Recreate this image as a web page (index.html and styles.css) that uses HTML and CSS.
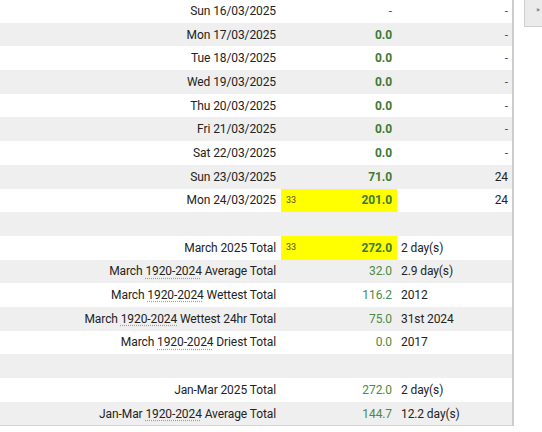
FILE: index.html
```html
<!DOCTYPE html>
<html>
<head>
<meta charset="utf-8">
<link rel="stylesheet" href="styles.css">
</head>
<body>
<div class="page">
  <div class="table">
    <div class="row"><div class="lbl"><span>Sun 16/03/2025</span></div><div class="val"><span class="dash">-</span></div><div class="extra right"><span class="dash">-</span></div></div>
    <div class="row alt"><div class="lbl"><span>Mon 17/03/2025</span></div><div class="val"><b class="g">0.0</b></div><div class="extra right"><span class="dash">-</span></div></div>
    <div class="row"><div class="lbl"><span>Tue 18/03/2025</span></div><div class="val"><b class="g">0.0</b></div><div class="extra right"><span class="dash">-</span></div></div>
    <div class="row alt"><div class="lbl"><span>Wed 19/03/2025</span></div><div class="val"><b class="g">0.0</b></div><div class="extra right"><span class="dash">-</span></div></div>
    <div class="row"><div class="lbl"><span>Thu 20/03/2025</span></div><div class="val"><b class="g">0.0</b></div><div class="extra right"><span class="dash">-</span></div></div>
    <div class="row alt"><div class="lbl"><span>Fri 21/03/2025</span></div><div class="val"><b class="g">0.0</b></div><div class="extra right"><span class="dash">-</span></div></div>
    <div class="row"><div class="lbl"><span>Sat 22/03/2025</span></div><div class="val"><b class="g">0.0</b></div><div class="extra right"><span class="dash">-</span></div></div>
    <div class="row alt"><div class="lbl"><span>Sun 23/03/2025</span></div><div class="val"><b class="g">71.0</b></div><div class="extra right"><span>24</span></div></div>
    <div class="row"><div class="lbl"><span>Mon 24/03/2025</span></div><div class="val hl"><span class="rank">33</span><b class="g">201.0</b></div><div class="extra right"><span>24</span></div></div>
    <div class="row alt"><div class="lbl"></div><div class="val"></div><div class="extra"></div></div>
    <div class="row"><div class="lbl"><span>March 2025 Total</span></div><div class="val hl"><span class="rank">33</span><b class="g">272.0</b></div><div class="extra"><span>2 day(s)</span></div></div>
    <div class="row alt"><div class="lbl"><span>March <abbr title="1920-2024">1920-2024</abbr> Average Total</span></div><div class="val"><span class="gl">32.0</span></div><div class="extra"><span>2.9 day(s)</span></div></div>
    <div class="row"><div class="lbl"><span>March <abbr title="1920-2024">1920-2024</abbr> Wettest Total</span></div><div class="val"><span class="gl">116.2</span></div><div class="extra"><span>2012</span></div></div>
    <div class="row alt"><div class="lbl"><span>March <abbr title="1920-2024">1920-2024</abbr> Wettest 24hr Total</span></div><div class="val"><span class="gl">75.0</span></div><div class="extra"><span>31st 2024</span></div></div>
    <div class="row"><div class="lbl"><span>March <abbr title="1920-2024">1920-2024</abbr> Driest Total</span></div><div class="val"><span class="gl">0.0</span></div><div class="extra"><span>2017</span></div></div>
    <div class="row alt"><div class="lbl"></div><div class="val"></div><div class="extra"></div></div>
    <div class="row"><div class="lbl"><span>Jan-Mar 2025 Total</span></div><div class="val"><span class="gl">272.0</span></div><div class="extra"><span>2 day(s)</span></div></div>
    <div class="row alt last"><div class="lbl"><span>Jan-Mar <abbr title="1920-2024">1920-2024</abbr> Average Total</span></div><div class="val"><span class="gl">144.7</span></div><div class="extra"><span>12.2 day(s)</span></div></div>
  </div>
  <div class="side">
    <div class="btn">»</div>
  </div>
</div>
</body>
</html>
```

FILE: styles.css
```css
html, body {
  margin: 0;
  padding: 0;
  background: #ffffff;
}
body {
  font-family: Roboto, "Liberation Sans", sans-serif;
  font-size: 12px;
  letter-spacing: -0.1px;
  color: #232323;
  overflow: hidden;
}
.page {
  display: flex;
  align-items: flex-start;
  margin-top: -1px;
  width: 542px;
  overflow: hidden;
}
.table {
  flex: none;
  width: 512px;
  border-right: 2px solid #cdcdcd;
  display: flex;
  flex-direction: column;
}
.row {
  display: grid;
  grid-template-columns: 281px 116px 115px;
  height: 23.7px;
  align-items: stretch;
  background: #ffffff;
}
.row.alt {
  background: #efefef;
}
.row.last {
  border-bottom: 1px solid #d4d4d4;
}
.lbl {
  display: flex;
  align-items: center;
  justify-content: flex-end;
  padding-right: 5px;
  white-space: nowrap;
}
.val {
  display: flex;
  align-items: center;
  justify-content: flex-end;
  padding: 0 5px;
}
.val.hl {
  background: #ffff00;
  justify-content: space-between;
}
.rank {
  font-size: 9px;
  color: #5a4d1a;
  align-self: flex-start;
  margin-top: 6px;
}
.extra {
  display: flex;
  align-items: center;
  padding: 0 4px;
  white-space: nowrap;
}
.extra.right {
  justify-content: flex-end;
}
.g {
  color: #3d7a35;
  font-weight: 700;
}
.gl {
  color: #4b8a44;
}
.dash {
  color: #555555;
}
abbr {
  text-decoration: underline dotted #a0a0a0;
  text-underline-offset: 2px;
}
.side {
  flex: none;
  width: 28px;
  padding-left: 10px;
}
.btn {
  width: 26px;
  height: 28px;
  background: #ebebeb;
  border: 1px solid #cfcfcf;
  border-top: none;
  box-sizing: border-box;
  color: #555555;
  font-size: 8px;
  line-height: 1;
  display: flex;
  align-items: center;
  padding-left: 11px;
  padding-bottom: 6px;
}
```
